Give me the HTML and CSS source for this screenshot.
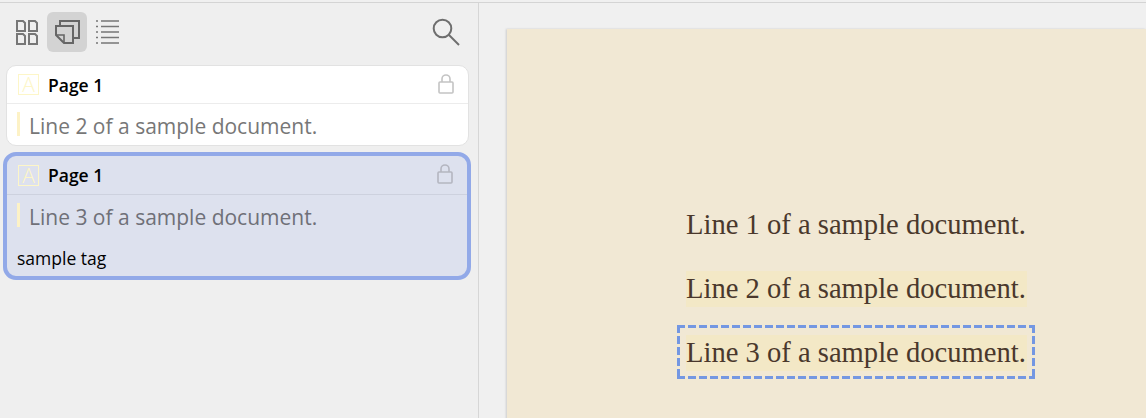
FILE: index.html
```html
<!DOCTYPE html>
<html lang="en">
<head>
    <meta charset="UTF-8">
    <meta name="viewport" content="width=device-width, initial-scale=1.0">
    <title>Sample document annotations</title>
    <link rel="stylesheet" href="styles.css">
</head>
<body>
    <div class="app">
        <aside class="sidebar">
            <div class="toolbar">
                <button class="tool">
                    <svg width="22" height="26" viewBox="0 0 22 26" fill="none" stroke="#777" stroke-width="2">
                        <path d="M1 2h6l2 2v8H1zM13 2h6l2 2v8h-8zM1 15h6l2 2v8H1zM13 15h6l2 2v8h-8z"/>
                    </svg>
                </button>
                <button class="tool active">
                    <svg width="26" height="26" viewBox="0 0 26 26" fill="none" stroke="#666" stroke-width="2">
                        <path d="M6 6V2h19v17h-6"/>
                        <path d="M2 7h17v17h-9l-8-8z"/>
                        <path d="M2 16h8v8" stroke-width="1.6"/>
                    </svg>
                </button>
                <button class="tool">
                    <svg width="24" height="26" viewBox="0 0 24 26" fill="none" stroke="#777" stroke-width="1.7">
                        <path d="M6 2h18M6 7.5h18M6 13h18M6 18.5h18M6 24h18"/>
                        <path d="M1 2h2M1 7.5h2M1 13h2M1 18.5h2M1 24h2"/>
                    </svg>
                </button>
                <button class="tool search">
                    <svg width="28" height="28" viewBox="0 0 28 28" fill="none" stroke="#6e6e6e" stroke-width="2">
                        <circle cx="10.5" cy="10.5" r="8.8"/>
                        <path d="M17 17l10 10"/>
                    </svg>
                </button>
            </div>

            <div class="card">
                <div class="card-head">
                    <span class="type-icon">A</span>
                    <span class="card-title">Page 1</span>
                    <svg class="lock" width="16" height="20" viewBox="0 0 16 20" fill="none" stroke="#c4c4c4" stroke-width="1.6">
                        <path d="M4 8V5a4 4 0 0 1 8 0v3"/>
                        <rect x="1" y="8" width="14" height="11" rx="1"/>
                    </svg>
                </div>
                <div class="card-body">
                    <p class="quote">Line 2 of a sample document.</p>
                </div>
            </div>

            <div class="card selected">
                <div class="card-head">
                    <span class="type-icon">A</span>
                    <span class="card-title">Page 1</span>
                    <svg class="lock" width="16" height="20" viewBox="0 0 16 20" fill="none" stroke="#b4b6c0" stroke-width="1.6">
                        <path d="M4 8V5a4 4 0 0 1 8 0v3"/>
                        <rect x="1" y="8" width="14" height="11" rx="1"/>
                    </svg>
                </div>
                <div class="card-body">
                    <p class="quote">Line 3 of a sample document.</p>
                </div>
                <div class="tags">sample tag</div>
            </div>
        </aside>

        <main class="viewer">
            <div class="page">
                <p class="line">Line 1 of a sample document.</p>
                <p class="line marked">Line 2 of a sample document.</p>
                <div class="focus">
                    <p class="line marked">Line 3 of a sample document.</p>
                </div>
            </div>
        </main>
    </div>
</body>
</html>
```

FILE: styles.css
```css
html, body {
    margin: 0;
    padding: 0;
    height: 418px;
    overflow: hidden;
    background-color: #f0f0f0;
}

body {
    padding-top: 2px;
    box-sizing: border-box;
    font-family: "Open Sans", "Noto Sans", sans-serif;
}

.app {
    display: flex;
    height: 416px;
    border-top: 1px solid #d4d4d4;
    box-sizing: border-box;
}

.sidebar {
    width: 479px;
    flex: none;
    box-sizing: border-box;
    border-right: 1px solid #d6d6d6;
    background-color: #efefef;
    padding: 9px 0 0 3px;
}

.toolbar {
    display: flex;
    align-items: center;
    height: 40px;
    padding: 0 12px 0 4px;
    margin-bottom: 13px;
}

.tool {
    width: 40px;
    height: 40px;
    padding: 0;
    border: none;
    border-radius: 6px;
    background: none;
    display: flex;
    align-items: center;
    justify-content: center;
}

.tool.active {
    background-color: #d3d3d3;
}

.tool.search {
    margin-left: auto;
}

.card {
    width: 463px;
    margin: 0 0 6px 3px;
    box-sizing: border-box;
    background-color: #fff;
    border: 1px solid #e2e2e2;
    border-radius: 10px;
}

.card.selected {
    width: 468px;
    margin: 0;
    background-color: #dde1ee;
    border: 4px solid #92a9e8;
    border-radius: 13px;
}

.card-head {
    display: flex;
    align-items: center;
    height: 37px;
    padding: 0 14px 0 11px;
    border-bottom: 1px solid #ececec;
}

.selected .card-head {
    height: 38px;
    border-bottom-color: #cdd1de;
}

.type-icon {
    width: 19px;
    height: 19px;
    border: 1px solid #fdf6c8;
    color: #fdf6c8;
    font-size: 21px;
    font-weight: 300;
    line-height: 19px;
    text-align: center;
    margin-right: 9px;
}

.card-title {
    font-size: 17.5px;
    font-weight: 600;
    color: #000;
}

.lock {
    margin-left: auto;
    margin-top: -2px;
}

.card-body {
    padding: 8px 12px 9px 10px;
}

.selected .card-body {
    padding-bottom: 0;
}

.quote {
    margin: 0;
    height: 24px;
    padding-left: 9px;
    border-left: 3px solid #fdf2c6;
    font-size: 21px;
    line-height: 28px;
    color: #777;
}

.selected .quote {
    color: #6f7078;
}

.tags {
    padding: 19px 11px 6px 10px;
    font-size: 17.5px;
    line-height: 24px;
    color: #000;
}

.viewer {
    flex: 1;
    padding: 26px 0 0 28px;
    min-width: 0;
}

.page {
    height: 400px;
    background-color: #f1e8d4;
    box-shadow: -1px 0 2px rgba(0, 0, 0, 0.15);
    padding: 178px 0 0 179px;
    box-sizing: border-box;
}

.line {
    margin: 0 0 28px;
    width: 341px;
    height: 36px;
    white-space: nowrap;
    font-family: "Liberation Serif", serif;
    font-size: 28.6px;
    line-height: 35px;
    color: #4a382c;
}

.marked {
    background-color: #f3e8c6;
}

/* long dashes, the border: dashed ones come out too short */
.focus {
    width: 358px;
    height: 54px;
    box-sizing: border-box;
    margin: -10px 0 0 -9px;
    padding: 10px 0 0 9px;
    background-image:
        linear-gradient(90deg, #7497e2 8px, transparent 8px),
        linear-gradient(90deg, #7497e2 8px, transparent 8px),
        linear-gradient(#7497e2 8px, transparent 8px),
        linear-gradient(#7497e2 8px, transparent 8px);
    background-size: 11px 3px, 11px 3px, 3px 11px, 3px 11px;
    background-position: 0 0, 0 100%, 0 0, 100% 0;
    background-repeat: repeat-x, repeat-x, repeat-y, repeat-y;
}

.focus .line {
    margin: 0;
}
```
